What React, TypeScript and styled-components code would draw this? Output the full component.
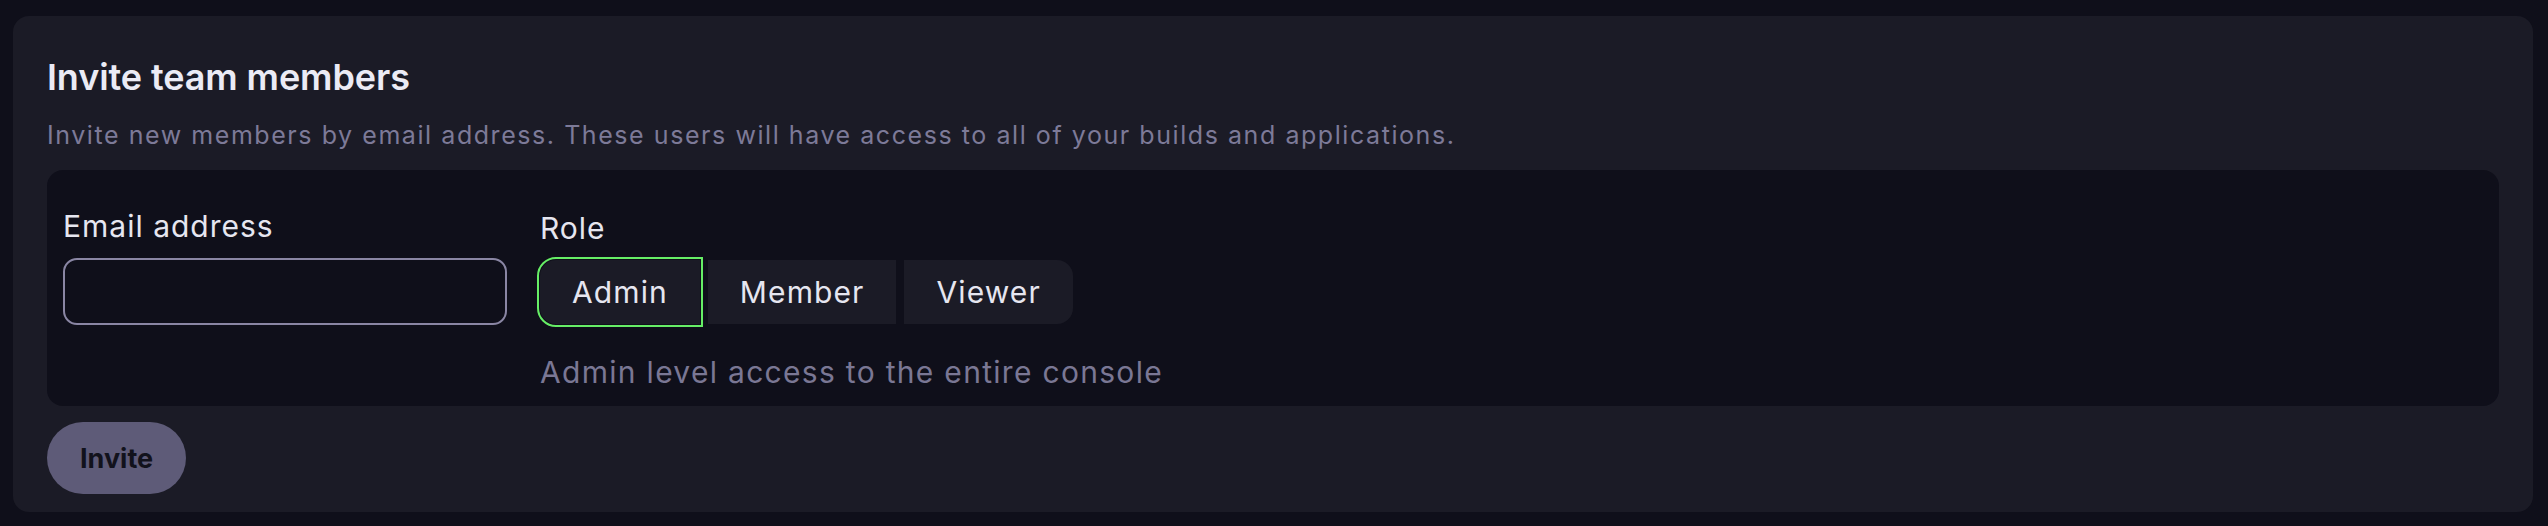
import React, { useState } from "react";
import styled, { createGlobalStyle } from "styled-components";

const GlobalStyle = createGlobalStyle`
  html, body {
    margin: 0;
    padding: 0;
    background: #0f0f1a;
  }
  body {
    font-family: Inter, "Noto Sans", "Liberation Sans", sans-serif;
    color: #e6e6f0;
  }
  * { box-sizing: border-box; }
`;

const Page = styled.div`
  padding: 16px 15px 14px 13px;
  background: #0f0f1a;
  min-height: 526px;
`;

const Card = styled.section`
  background: #1b1b26;
  border-radius: 16px;
  padding: 34px 34px 18px 34px;
  display: flex;
  flex-direction: column;
  align-items: flex-start;
`;

const Title = styled.h2`
  margin: 0 0 13px 0;
  font-size: 36px;
  line-height: 54px;
  font-weight: 600;
  color: #ebebf5;
  letter-spacing: -0.1px;
`;

const Description = styled.p`
  margin: 0 0 17px 0;
  font-size: 25px;
  line-height: 36px;
  color: #7d7a98;
  letter-spacing: 1.56px;
`;

const Panel = styled.div`
  align-self: stretch;
  background: #0f0f1a;
  border-radius: 16px;
  padding: 38px 16px 16px 16px;
  display: flex;
  align-items: flex-start;
  gap: 33px;
  margin-bottom: 16px;
`;

const Field = styled.div<{ $offset?: number }>`
  display: flex;
  flex-direction: column;
  padding-top: ${(p) => p.$offset ?? 0}px;
`;

const Label = styled.label`
  font-size: 30px;
  line-height: 36px;
  color: #e6e6f0;
  margin-bottom: 14px;
  letter-spacing: 1px;
`;

const Input = styled.input`
  width: 444px;
  height: 67px;
  border: 2px solid #8a86a4;
  border-radius: 14px;
  background: #0f0f1a;
  color: #e6e6f0;
  font-size: 28px;
  font-family: inherit;
  padding: 0 16px;
  outline: none;
`;

const Segments = styled.div`
  display: flex;
  gap: 8px;
`;

const Segment = styled.button<{ $active?: boolean }>`
  height: 64px;
  padding: 0 32px;
  border: none;
  background: #1b1b26;
  color: #e6e6f0;
  font-family: inherit;
  font-size: 30px;
  letter-spacing: 1.1px;
  cursor: pointer;
  border-radius: 0;
  outline: ${(p) => (p.$active ? "2px solid #66ee66" : "none")};
  outline-offset: 1px;

  &:first-child {
    border-radius: 16px 0 0 16px;
  }
  &:last-child {
    border-radius: 0 16px 16px 0;
  }
`;

const Hint = styled.div`
  margin-top: 30px;
  font-size: 30px;
  line-height: 36px;
  color: #7a7794;
  letter-spacing: 1.3px;
`;

const InviteButton = styled.button`
  height: 72px;
  padding: 0 33px;
  border: none;
  border-radius: 36px;
  background: #5e5b78;
  color: #12121c;
  font-family: inherit;
  font-size: 27px;
  font-weight: 700;
  cursor: pointer;
`;

const roles = [
  { id: "admin", label: "Admin", hint: "Admin level access to the entire console" },
  { id: "member", label: "Member", hint: "Member level access to the console" },
  { id: "viewer", label: "Viewer", hint: "Read-only access to the console" },
];

export default function App() {
  const [role, setRole] = useState("admin");
  const current = roles.find((r) => r.id === role)!;
  return (
    <>
      <GlobalStyle />
      <Page>
        <Card>
          <Title>Invite team members</Title>
          <Description>
            Invite new members by email address. These users will have access to all of your builds and applications.
          </Description>
          <Panel>
            <Field>
              <Label htmlFor="email">Email address</Label>
              <Input id="email" type="email" />
            </Field>
            <Field $offset={2}>
              <Label>Role</Label>
              <Segments>
                {roles.map((r) => (
                  <Segment key={r.id} $active={r.id === role} onClick={() => setRole(r.id)}>
                    {r.label}
                  </Segment>
                ))}
              </Segments>
              <Hint>{current.hint}</Hint>
            </Field>
          </Panel>
          <InviteButton>Invite</InviteButton>
        </Card>
      </Page>
    </>
  );
}
